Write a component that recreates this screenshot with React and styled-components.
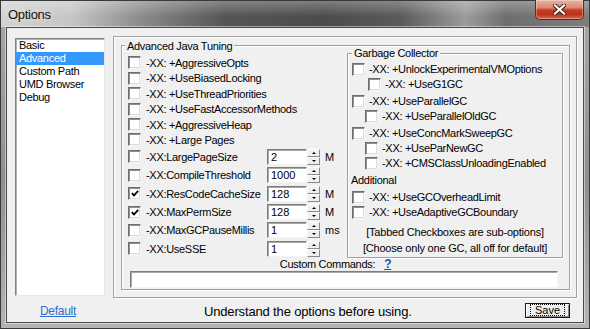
import React from 'react';
import styled, { createGlobalStyle } from 'styled-components';

const GlobalStyle = createGlobalStyle`
  html, body {
    margin: 0;
    padding: 0;
    background: #fff;
  }
  body {
    font-family: "Liberation Sans", Arial, sans-serif;
  }
  * {
    box-sizing: border-box;
  }
`;

const Window = styled.div`
  width: 590px;
  height: 329px;
  display: flex;
  flex-direction: column;
  border: 1px solid #3a3a3a;
  padding: 0 5px 5px 5px;
  background: linear-gradient(180deg, #a9a9a9 0%, #8f8f8f 55%, #b4b4b4 100%);
`;

const TitleBar = styled.div`
  height: 26px;
  margin: 0 -5px;
  padding-left: 7px;
  display: flex;
  align-items: flex-start;
  justify-content: space-between;
  background:
    linear-gradient(180deg, rgba(255,255,255,0.28) 0%, rgba(255,255,255,0) 60%),
    linear-gradient(90deg, #d3d3d3 0%, #c6c6c6 12%, #8a8a8a 24%, #555 38%, #4c4c4c 55%, #5a5a5a 68%, #9c9c9c 79%, #6e6e6e 86%, #7d7d7d 100%);
`;

const Title = styled.span`
  margin-top: 6px;
  font-size: 13px;
  letter-spacing: -0.3px;
  color: #111;
  text-shadow: 0 0 6px rgba(255,255,255,0.7);
`;

const CloseButton = styled.div`
  width: 49px;
  height: 20px;
  margin-top: -1px;
  margin-right: 5px;
  display: flex;
  align-items: center;
  justify-content: center;
  border: 1px solid #5e2b20;
  border-top: none;
  border-radius: 0 0 5px 5px;
  box-shadow: inset 0 0 0 1px rgba(255,255,255,0.3);
  background: linear-gradient(180deg, #e9b3a5 0%, #d98a75 40%, #c5402a 52%, #b9311a 75%, #d4694a 100%);
`;

const Client = styled.div`
  flex: 1;
  display: flex;
  flex-direction: column;
  background: #f0f0f0;
  border: 1px solid #4a4a4a;
  box-shadow: 0 0 0 1px rgba(255,255,255,0.45);
  padding-top: 8px;
`;

const Main = styled.div`
  display: flex;
  gap: 8px;
  padding: 0 6px 0 8px;
`;

const ListBox = styled.div`
  width: 90px;
  height: 258px;
  margin-top: 2px;
  background: #fff;
  border: 1px solid;
  border-color: #828282 #e6e6e6 #e6e6e6 #828282;
  box-shadow: inset 1px 1px 0 #b0b0b0;
`;

const ListItem = styled.div`
  height: 13px;
  line-height: 13px;
  padding-left: 3px;
  font-size: 11px;
  letter-spacing: -0.3px;
  color: ${p => (p.$selected ? '#fff' : '#000')};
  background: ${p => (p.$selected ? '#3399ff' : 'transparent')};
`;

const Panel = styled.div`
  width: 464px;
  height: 262px;
  display: flex;
  flex-direction: column;
  border: 1px solid #a0a0a0;
  box-shadow: inset 1px 1px 0 #fff, 1px 1px 0 #fff;
`;

const GroupBox = styled.fieldset`
  margin: 0;
  min-width: 0;
  border: 1px solid #a0a0a0;
  box-shadow: inset 1px 1px 0 #fff, 1px 1px 0 #fff;
`;

const AdvancedBox = styled(GroupBox)`
  margin: 4.5px 6px 0 7px;
  padding: 0 6px 1px 6px;
`;

const GcBox = styled(GroupBox)`
  width: 216px;
  margin-top: -0.5px;
  padding: 4.5px 0 1px 4px;
`;

const GroupTitle = styled.legend`
  padding: 0 2px;
  margin-left: ${p => p.$shift || 0}px;
  font-size: 11px;
  line-height: 8px;
  letter-spacing: -0.3px;
  color: #000;
  background: #f0f0f0;
`;

const Columns = styled.div`
  display: flex;
`;

const LeftColumn = styled.div`
  width: 219px;
  padding-top: 5.8px;
  display: flex;
  flex-direction: column;
`;

const OptionRow = styled.div`
  display: flex;
  align-items: center;
  gap: ${p => p.$gap || 5}px;
  height: ${p => p.$h}px;
  padding-left: ${p => p.$indent || 0}px;
`;

const Label = styled.span`
  font-size: 11px;
  letter-spacing: -0.3px;
  color: #000;
  white-space: nowrap;
  width: ${p => (p.$w ? `${p.$w}px` : 'auto')};
`;

const Box = styled.span`
  width: 13px;
  height: 13px;
  flex: none;
  display: flex;
  align-items: center;
  justify-content: center;
  background: #fff;
  border: 1px solid;
  border-color: #6f6f6f #f4f4f4 #f4f4f4 #6f6f6f;
  box-shadow: inset 1px 1px 0 #8e8e8e, inset -1px -1px 0 #dcdcdc;
`;

const NumField = styled.span`
  width: 40px;
  height: 16px;
  flex: none;
  padding-left: 3px;
  display: flex;
  align-items: center;
  font-size: 11px;
  background: #fff;
  border: 1px solid;
  border-color: #7c7c7c #f4f4f4 #f4f4f4 #7c7c7c;
  box-shadow: inset 1px 1px 0 #a8a8a8;
`;

const Spin = styled.span`
  width: 13px;
  height: 16px;
  flex: none;
  margin-left: -5px;
  display: flex;
  flex-direction: column;
`;

const SpinButton = styled.span`
  flex: 1;
  display: flex;
  align-items: center;
  justify-content: center;
  background: #f0f0f0;
  border: 1px solid;
  border-color: #fff #8a8a8a #8a8a8a #fff;
  &::after {
    content: '';
    border-left: 2px solid transparent;
    border-right: 2px solid transparent;
    ${p => (p.$down ? 'border-top: 2px solid #000;' : 'border-bottom: 2px solid #000;')}
  }
`;

const Unit = styled.span`
  font-size: 11px;
  color: #000;
`;

const GcGroup = styled.div`
  display: flex;
  flex-direction: column;
  margin-bottom: 2px;
`;

const Heading = styled.div`
  height: 15px;
  line-height: 15px;
  margin-left: -1px;
  margin-bottom: 2px;
  font-size: 11px;
  letter-spacing: -0.3px;
`;

const Notes = styled.div`
  margin-top: 4.5px;
  margin-left: -4px;
  text-align: center;
  font-size: 11px;
  line-height: 16px;
  letter-spacing: -0.2px;
`;

const CustomRow = styled.div`
  height: 12px;
  display: flex;
  align-items: center;
  justify-content: center;
  gap: 9px;
  padding-right: 20px;
  font-size: 11px;
  letter-spacing: -0.3px;
`;

const HelpLink = styled.span`
  color: #1552c4;
  font-weight: bold;
  font-size: 12px;
  text-decoration: underline;
`;

const CommandInput = styled.div`
  width: 428px;
  height: 17px;
  margin: 1px 0 0 2px;
  background: #fff;
  border: 1px solid;
  border-color: #7c7c7c #f4f4f4 #f4f4f4 #7c7c7c;
  box-shadow: inset 1px 1px 0 #a8a8a8;
`;

const Footer = styled.div`
  flex: 1;
  display: flex;
  align-items: center;
  padding: 0 13px 0 33px;
`;

const DefaultLink = styled.span`
  font-size: 12px;
  letter-spacing: -0.3px;
  color: #2a6fd1;
  text-decoration: underline;
  margin-top: 2px;
`;

const Notice = styled.span`
  margin-left: 128px;
  margin-top: 2px;
  font-size: 13px;
  letter-spacing: -0.15px;
  color: #000;
`;

const SaveButton = styled.div`
  margin-left: auto;
  width: 45px;
  height: 15px;
  display: flex;
  align-items: center;
  justify-content: center;
  background: #f0f0f0;
  border: 1px solid #1a1a1a;
  box-shadow: inset 1px 1px 0 #fff, inset -1px -1px 0 #8a8a8a;
  font-size: 11px;
`;

const FocusRect = styled.span`
  padding: 0 4px;
  line-height: 10px;
  outline: 1px dotted #000;
`;

const CheckBox = ({ checked }) => (
  <Box>
    {checked && (
      <svg width="8" height="7" viewBox="0 0 8 7">
        <polyline points="0.8,3.2 3,5.4 7.2,0.9" fill="none" stroke="#000" strokeWidth="1.8" />
      </svg>
    )}
  </Box>
);

const pages = ['Basic', 'Advanced', 'Custom Path', 'UMD Browser', 'Debug'];

const flags = [
  '-XX: +AggressiveOpts',
  '-XX: +UseBiasedLocking',
  '-XX: +UseThreadPriorities',
  '-XX: +UseFastAccessorMethods',
  '-XX: +AggressiveHeap',
  '-XX: +Large Pages',
];

const numbers = [
  { label: '-XX:LargePageSize', value: '2', unit: 'M' },
  { label: '-XX:CompileThreshold', value: '1000', unit: '' },
  { label: '-XX:ResCodeCacheSize', value: '128', unit: 'M', checked: true },
  { label: '-XX:MaxPermSize', value: '128', unit: 'M', checked: true },
  { label: '-XX:MaxGCPauseMillis', value: '1', unit: 'ms' },
  { label: '-XX:UseSSE', value: '1', unit: '' },
];

const gcGroups = [
  [
    { label: '-XX: +UnlockExperimentalVMOptions' },
    { label: '-XX: +UseG1GC', indent: 16 },
  ],
  [
    { label: '-XX: +UseParallelGC' },
    { label: '-XX: +UseParallelOldGC', indent: 13 },
  ],
  [
    { label: '-XX: +UseConcMarkSweepGC' },
    { label: '-XX: +UseParNewGC', indent: 13 },
    { label: '-XX: +CMSClassUnloadingEnabled', indent: 13 },
  ],
];

const additional = ['-XX: +UseGCOverheadLimit', '-XX: +UseAdaptiveGCBoundary'];

export default function App() {
  return (
    <>
      <GlobalStyle />
      <Window>
        <TitleBar>
          <Title>Options</Title>
          <CloseButton>
            <svg width="13" height="11" viewBox="0 0 13 11">
              <path d="M2 1.5 L11 9.5 M11 1.5 L2 9.5" stroke="#3a1a14" strokeWidth="4" strokeLinecap="square" />
              <path d="M2 1.5 L11 9.5 M11 1.5 L2 9.5" stroke="#fff" strokeWidth="2.2" strokeLinecap="square" />
            </svg>
          </CloseButton>
        </TitleBar>
        <Client>
          <Main>
            <ListBox>
              {pages.map(p => (
                <ListItem key={p} $selected={p === 'Advanced'}>{p}</ListItem>
              ))}
            </ListBox>
            <Panel>
              <AdvancedBox>
                <GroupTitle $shift={-3}>Advanced Java Tuning</GroupTitle>
                <Columns>
                  <LeftColumn>
                    {flags.map(f => (
                      <OptionRow key={f} $h={15.4}>
                        <CheckBox />
                        <Label>{f}</Label>
                      </OptionRow>
                    ))}
                    {numbers.map(n => (
                      <OptionRow key={n.label} $h={18.4}>
                        <CheckBox checked={n.checked} />
                        <Label $w={116}>{n.label}</Label>
                        <NumField>{n.value}</NumField>
                        <Spin>
                          <SpinButton />
                          <SpinButton $down />
                        </Spin>
                        <Unit>{n.unit}</Unit>
                      </OptionRow>
                    ))}
                  </LeftColumn>
                  <GcBox>
                    <GroupTitle>Garbage Collector</GroupTitle>
                    {gcGroups.map((g, i) => (
                      <GcGroup key={i}>
                        {g.map(o => (
                          <OptionRow key={o.label} $h={15} $gap={4} $indent={o.indent}>
                            <CheckBox />
                            <Label>{o.label}</Label>
                          </OptionRow>
                        ))}
                      </GcGroup>
                    ))}
                    <Heading>Additional</Heading>
                    <GcGroup>
                      {additional.map(a => (
                        <OptionRow key={a} $h={15} $gap={4}>
                          <CheckBox />
                          <Label>{a}</Label>
                        </OptionRow>
                      ))}
                    </GcGroup>
                    <Notes>
                      <div>[Tabbed Checkboxes are sub-options]</div>
                      <div>[Choose only one GC, all off for default]</div>
                    </Notes>
                  </GcBox>
                </Columns>
                <CustomRow>
                  <span>Custom Commands:</span>
                  <HelpLink>?</HelpLink>
                </CustomRow>
                <CommandInput />
              </AdvancedBox>
            </Panel>
          </Main>
          <Footer>
            <DefaultLink>Default</DefaultLink>
            <Notice>Understand the options before using.</Notice>
            <SaveButton>
              <FocusRect>Save</FocusRect>
            </SaveButton>
          </Footer>
        </Client>
      </Window>
    </>
  );
}
